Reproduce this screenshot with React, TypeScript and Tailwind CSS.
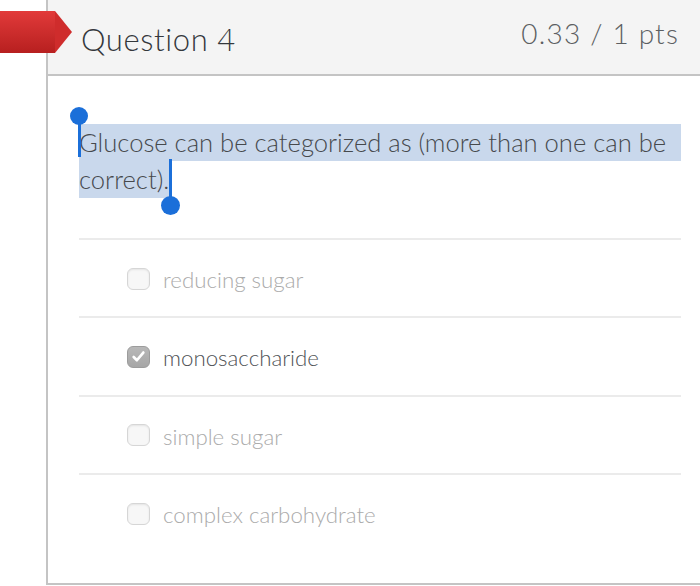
import React from "react";

const options = [
  { label: "reducing sugar", checked: false },
  { label: "monosaccharide", checked: true },
  { label: "simple sugar", checked: false },
  { label: "complex carbohydrate", checked: false },
];

const light = { fontFamily: "'Lato Light', Lato, 'Open Sans', sans-serif", fontWeight: 300 };

function Box({ checked }: { checked: boolean }) {
  if (checked) {
    return (
      <div className="w-[23px] h-[22px] rounded-[6px] bg-gradient-to-b from-[#b8b8b8] to-[#a6a6a6] border border-[#9c9c9c] flex items-center justify-center">
        <svg width="15" height="15" viewBox="0 0 14 14">
          <path d="M2.5 7.5 L5.5 10.5 L11.5 3.3" fill="none" stroke="white" strokeWidth="2.5" strokeLinecap="round" strokeLinejoin="round" />
        </svg>
      </div>
    );
  }
  return <div className="w-[23px] h-[22px] rounded-[6px] bg-[#f7f7f7] border border-[#d6d6d6] shadow-[inset_0_1px_2px_rgba(0,0,0,0.08)]" />;
}

export default function App() {
  return (
    <div className="w-[700px] h-[586px] bg-white relative overflow-hidden flex" style={{ fontFamily: "Lato, 'Open Sans', sans-serif" }}>
      <div className="w-[46px] shrink-0" />
      <div className="flex-1 h-[585px] border-l-2 border-b-2 border-[#c4c4c4] flex flex-col">
        <div className="h-[76px] shrink-0 bg-[#f4f4f4] border-b-2 border-[#c4c4c4] flex items-center justify-between pl-[33px] pr-[21px] pt-[4px]">
          <span className="text-[31px] text-[#34383c] tracking-[0.6px]" style={light}>Question 4</span>
          <span className="text-[28px] text-[#5c5f62] -mt-[12px] tracking-[1.2px]" style={light}>0.33 / 1 pts</span>
        </div>
        <div className="pl-[31px] pr-[19px] pt-[48px] relative">
          <div className="text-[25.6px] leading-[37px] text-[#46494c]" style={light}>
            <div className="bg-[#c9d8ec] whitespace-nowrap">Glucose can be categorized as (more than one can be</div>
            <span className="inline-block bg-[#c9d8ec] pr-[3px]">correct).</span>
          </div>
          <div className="mt-[40px] flex flex-col">
            {options.map((o) => (
              <div key={o.label} className="h-[78.3px] border-t-2 border-[#ebebeb] flex items-center pl-[48px] pt-[1px] gap-[13px]">
                <Box checked={o.checked} />
                <span className={"text-[22.3px] pt-[2px] " + (o.checked ? "text-[#505356]" : "text-[#ababab]")} style={light}>{o.label}</span>
              </div>
            ))}
          </div>
          {/* selection handles */}
          <div className="absolute left-[22px] top-[31px] w-[18px] h-[18px] rounded-full bg-[#1b6fd9]" />
          <div className="absolute left-[30px] top-[40px] w-[3px] h-[41px] bg-[#1b6fd9]" />
          <div className="absolute left-[121px] top-[83px] w-[3px] h-[42px] bg-[#1b6fd9]" />
          <div className="absolute left-[113px] top-[120px] w-[19px] h-[19px] rounded-full bg-[#1b6fd9]" />
        </div>
      </div>
      {/* red flag */}
      <div className="absolute left-0 top-[11px] flex">
        <div className="w-[55px] h-[42px] bg-gradient-to-b from-[#e23a3a] to-[#b71f1f]" />
        <div className="w-0 h-0 border-y-[21px] border-y-transparent border-l-[17px] border-l-[#cf2c2c]" />
      </div>
    </div>
  );
}
